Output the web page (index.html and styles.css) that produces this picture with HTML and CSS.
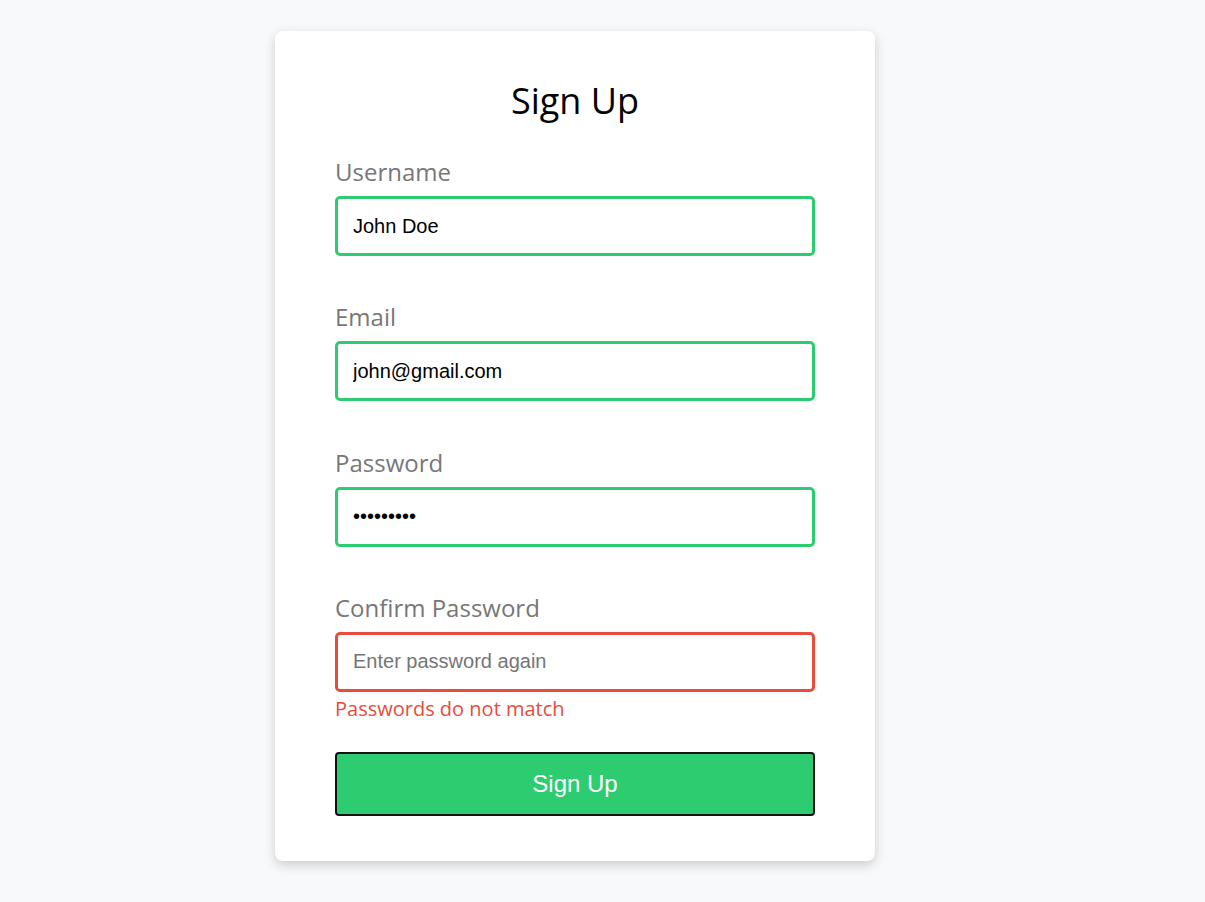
FILE: index.html
```html
<!DOCTYPE html>
<html lang="en">
<head>
<meta charset="utf-8">
<title>Sign Up</title>
<link rel="stylesheet" href="styles.css">
</head>
<body>
<main class="page">
  <form class="card">
    <h1 class="title">Sign Up</h1>
    <div class="field">
      <label class="label" for="u">Username</label>
      <input class="input ok" id="u" type="text" value="John Doe">
    </div>
    <div class="field">
      <label class="label" for="e">Email</label>
      <input class="input ok" id="e" type="text" value="john@gmail.com">
    </div>
    <div class="field">
      <label class="label" for="p">Password</label>
      <input class="input ok" id="p" type="password" value="password1">
    </div>
    <div class="field last">
      <label class="label" for="c">Confirm Password</label>
      <input class="input bad" id="c" type="password" placeholder="Enter password again">
      <div class="error">Passwords do not match</div>
    </div>
    <button class="btn" type="button">Sign Up</button>
  </form>
</main>
</body>
</html>
```
FILE: styles.css
```css
* { box-sizing: border-box; }
html, body { margin: 0; padding: 0; }
body {
  background: #f8f9fb;
  font-family: "Open Sans", "Liberation Sans", sans-serif;
  width: 1205px;
  height: 902px;
  overflow: hidden;
}
.page {
  display: flex;
  justify-content: flex-start;
  padding: 31px 0 0 275px;
}
.card {
  width: 600px;
  background: #fff;
  border-radius: 8px;
  box-shadow: 0 4px 12px rgba(0,0,0,0.18);
  padding: 50px 60px 45px;
}
.title {
  margin: 0 0 34px;
  text-align: center;
  font-size: 36px;
  font-weight: 400;
  line-height: 40px;
  color: #000;
}
.field { margin-bottom: 44.33px; }
.field.last { margin-bottom: 30px; }
.label {
  display: block;
  font-size: 24px;
  line-height: 33px;
  color: #777;
  margin-bottom: 8px;
}
.input {
  display: block;
  width: 480px;
  height: 60px;
  border: 3px solid #2ecc71;
  border-radius: 5px;
  padding: 0 15px;
  font-family: "Liberation Sans", Arial, sans-serif;
  font-size: 20px;
  color: #000;
  outline: none;
  background: #fff;
}
.input.bad { border-color: #e74c3c; }
.input::placeholder { color: #757575; }
.error {
  margin-top: 3px;
  font-size: 20px;
  line-height: 27px;
  color: #e74c3c;
}
.btn {
  display: block;
  width: 480px;
  height: 64px;
  background: #2ecc71;
  border: 2px solid #111;
  border-radius: 4px;
  color: #fff;
  font-family: "Liberation Sans", Arial, sans-serif;
  font-size: 24px;
  cursor: pointer;
}
```
